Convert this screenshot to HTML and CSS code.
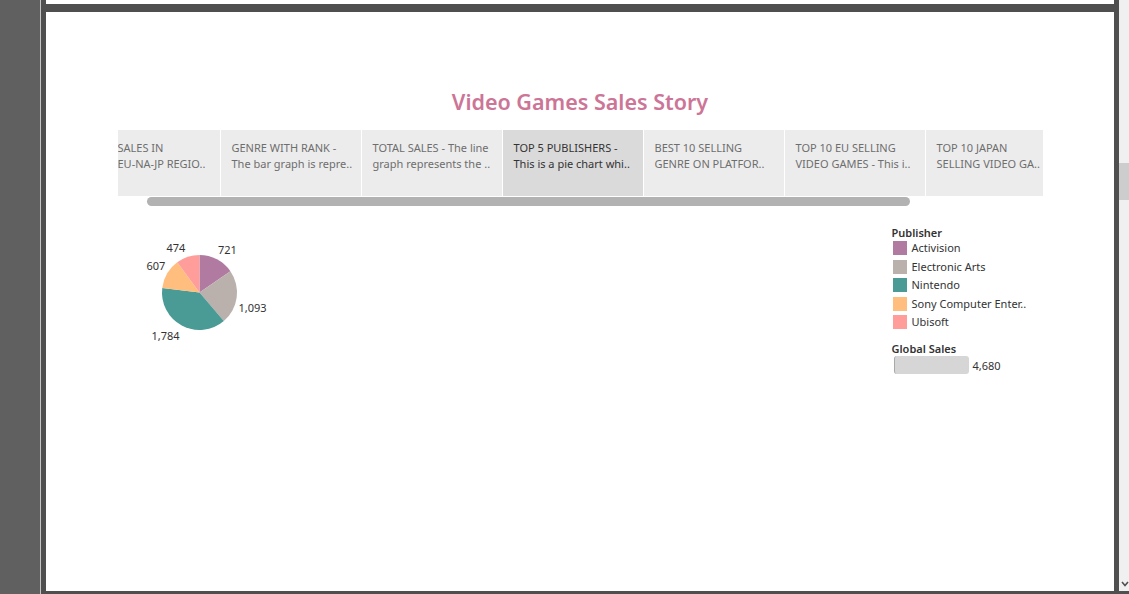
FILE: index.html
```html
<!DOCTYPE html>
<html>
<head>
<meta charset="utf-8">
<link rel="stylesheet" href="styles.css">
</head>
<body>
  <div class="sidebar"></div>
  <div class="sidebar-edge"></div>
  <div class="frame">
    <div class="prev"></div>
    <div class="canvas">
      <h1 class="title">Video Games Sales Story</h1>
      <div class="story">
        <div class="tabs">
          <div class="tab tab-clipped">SALES IN<br>EU-NA-JP REGIO..</div>
          <div class="tab">GENRE WITH RANK -<br>The bar graph is repre..</div>
          <div class="tab">TOTAL SALES - The line<br>graph represents the ..</div>
          <div class="tab tab-active">TOP 5 PUBLISHERS -<br>This is a pie chart whi..</div>
          <div class="tab">BEST 10 SELLING<br>GENRE ON PLATFOR..</div>
          <div class="tab">TOP 10 EU SELLING<br>VIDEO GAMES - This i..</div>
          <div class="tab">TOP 10 JAPAN<br>SELLING VIDEO GA..</div>
        </div>
        <div class="hscroll"></div>
        <div class="dashboard">
          <div class="viz">
            <svg class="pie" width="140" height="110" viewBox="0 0 140 110">
              <path d="M59.5 54.5 L59.5 17 A37.5 37.5 0 0 1 90.4 33.25 Z" fill="#b07aa1"/>
              <path d="M59.5 54.5 L90.4 33.25 A37.5 37.5 0 0 1 83.82 83.05 Z" fill="#bab0ac"/>
              <path d="M59.5 54.5 L83.82 83.05 A37.5 37.5 0 0 1 22.27 50.04 Z" fill="#4a9a95"/>
              <path d="M59.5 54.5 L22.27 50.04 A37.5 37.5 0 0 1 37.21 24.34 Z" fill="#ffbe7d"/>
              <path d="M59.5 54.5 L37.21 24.34 A37.5 37.5 0 0 1 59.5 17 Z" fill="#ff9d9a"/>
              <text x="78" y="16">721</text>
              <text x="26.5" y="13.5">474</text>
              <text x="6.5" y="32">607</text>
              <text x="98.5" y="74">1,093</text>
              <text x="11.5" y="102">1,784</text>
            </svg>
          </div>
          <div class="legend">
            <div class="legend-title">Publisher</div>
            <div class="legend-row"><span class="swatch sw-activision"></span>Activision</div>
            <div class="legend-row"><span class="swatch sw-ea"></span>Electronic Arts</div>
            <div class="legend-row"><span class="swatch sw-nintendo"></span>Nintendo</div>
            <div class="legend-row"><span class="swatch sw-sony"></span>Sony Computer Enter..</div>
            <div class="legend-row"><span class="swatch sw-ubisoft"></span>Ubisoft</div>
            <div class="legend-title legend-title-size">Global Sales</div>
            <div class="size-row"><span class="size-bar"></span>4,680</div>
          </div>
        </div>
      </div>
    </div>
  </div>
  <div class="vscroll">
    <div class="vthumb"></div>
    <div class="vspacer"></div>
    <svg class="varrow" width="8" height="6" viewBox="0 0 8 6"><path d="M1 1 L4 4.5 L7 1" fill="none" stroke="#505050" stroke-width="1.6"/></svg>
  </div>
</body>
</html>
```

FILE: styles.css
```css
html, body {
  margin: 0;
  padding: 0;
}
body {
  width: 1129px;
  height: 594px;
  overflow: hidden;
  display: flex;
  background: #4f4f4f;
  font-family: "Noto Sans", "Open Sans", sans-serif;
}
.sidebar {
  width: 40px;
  background: #606060;
}
.sidebar-edge {
  width: 1px;
  background: #c4c4c4;
}
.frame {
  width: 1068px;
  padding: 0 5px;
  display: flex;
  flex-direction: column;
  background: #4f4f4f;
}
.prev {
  height: 4px;
  background: #ffffff;
}
.canvas {
  flex: 1;
  margin-top: 8px;
  margin-bottom: 3px;
  background: #ffffff;
  display: flex;
  flex-direction: column;
}
.title {
  margin: 77px 0 0 0;
  height: 26px;
  line-height: 26px;
  text-align: center;
  font-size: 21.5px;
  font-weight: 600;
  color: #cc7596;
}
.story {
  width: 925px;
  margin: 15px auto 0 auto;
  display: flex;
  flex-direction: column;
}
.tabs {
  height: 66px;
  display: flex;
  gap: 1px;
  overflow: hidden;
  background: #ffffff;
}
.tab {
  flex: 0 0 140px;
  box-sizing: border-box;
  padding: 10px 0 0 11px;
  background: #ececec;
  color: #6e6e6e;
  font-size: 11px;
  line-height: 16px;
  white-space: nowrap;
  overflow: hidden;
}
.tab-clipped {
  flex-basis: 102px;
  padding-left: 0;
}
.tab-active {
  background: #dadada;
  color: #333333;
}
.hscroll {
  margin: 1px 0 0 29px;
  width: 763px;
  height: 9px;
  border-radius: 5px;
  background: #b2b2b2;
}
.dashboard {
  display: flex;
}
.viz {
  flex: 1;
}
.pie {
  display: block;
  margin: 32px 0 0 22px;
}
.pie text {
  font-family: "Noto Sans", "Open Sans", sans-serif;
  font-size: 11px;
  fill: #333333;
}
.legend {
  width: 151px;
  margin-top: 20px;
  font-size: 11px;
  color: #333333;
}
.legend-title {
  height: 14px;
  line-height: 14px;
  font-weight: 600;
  color: #333333;
}
.legend-title-size {
  margin-top: 9.5px;
}
.legend-row {
  height: 18.5px;
  display: flex;
  align-items: flex-start;
  line-height: 16px;
  white-space: nowrap;
}
.swatch {
  width: 14px;
  height: 14px;
  margin: 1px 5px 0 1px;
  flex: none;
}
.sw-activision { background: #b07aa1; }
.sw-ea { background: #bab0ac; }
.sw-nintendo { background: #4a9a95; }
.sw-sony { background: #ffbe7d; }
.sw-ubisoft { background: #ff9d9a; }
.size-row {
  height: 18px;
  display: flex;
  align-items: center;
}
.size-bar {
  width: 75px;
  height: 18px;
  margin: 0 4px 0 2px;
  box-sizing: border-box;
  border-left: 1px solid #a9a9a9;
  border-radius: 3px;
  background: #d6d6d6;
}
.vscroll {
  width: 10px;
  background: #f0f0f0;
  display: flex;
  flex-direction: column;
  align-items: center;
  margin-bottom: 3px;
}
.vthumb {
  width: 10px;
  height: 37px;
  margin-top: 163px;
  background: #cdcdcd;
}
.vspacer {
  flex: 1;
}
.varrow {
  display: block;
  margin: 0 0 4px 1px;
}
```
